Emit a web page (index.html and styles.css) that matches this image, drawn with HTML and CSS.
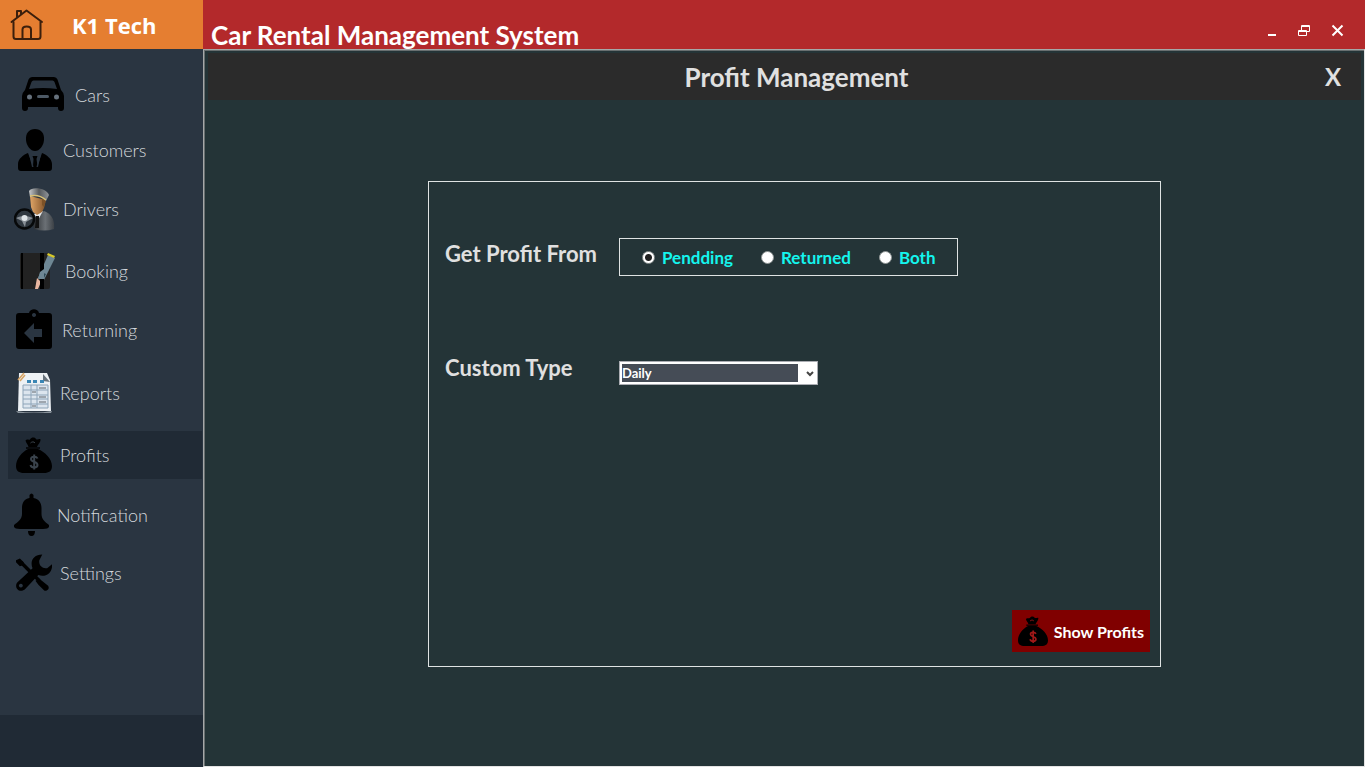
FILE: index.html
```
<!DOCTYPE html>
<html lang="en">
<head>
<meta charset="utf-8">
<title>Car Rental Management System</title>
<link rel="stylesheet" href="styles.css">
</head>
<body>
<svg class="sprite" aria-hidden="true">
  <symbol id="money-bag" viewBox="0 0 36 36">
    <path fill="#000" d="M9.500 3.500 C11 1.500 12.500 3.500 14 2.500 C15.500 0 18.500 0 20 2 C21.500 3.500 23.500 1 24.500 2.500 C24.500 6 22 7 21 10 H12.500 C12 7 10 6.500 9.500 3.500Z M12 12 H22 C29 15 36 22 36 29 C36 34 33 36 28 36 H8 C3 36 0 34 0 29 C0 22 6 15 12 12Z"/>
    <path fill="none" stroke="#000" stroke-width="1.500" d="M10 11 H24"/>
    <path class="dollar" fill="none" stroke-width="2" d="M21.500 21.500 C20.500 19 15 19 15 22 C15 25.500 21.500 24 21.500 28 C21.500 31 15.500 31.500 14.500 28 M18.200 17.500 V32.500"/>
    <path class="dollar" fill="none" stroke-width="1" d="M14.500 6 C16 4.500 18 4.500 19 6"/>
  </symbol>
</svg>
<div class="app">
  <aside class="sidebar">
    <header class="brand">
      <svg class="home" viewBox="0 0 34 32" width="34" height="32" fill="none" stroke="#3b1f0c" stroke-width="2" stroke-linecap="round" stroke-linejoin="round">
        <path d="M1.500 13 L16.500 1.500 L32 13"/>
        <path d="M3.500 13 V27.500 Q3.500 30 6 30 H28 Q30.500 30 30.500 27.500 V13"/>
        <path d="M7 8 V2 H11 V5"/>
        <path d="M12.500 30 V20.500 Q12.500 17.500 16.700 17.500 Q21 17.500 21 20.500 V30"/>
      </svg>
      <span>K1 Tech</span>
    </header>
    <nav class="nav">
      <button class="item indent-xl" type="button">
        <svg viewBox="0 0 45 36" width="45" height="36">
          <path fill="#000" fill-rule="evenodd" d="M10 0 H32 Q34.500 0 35.500 2.500 L39 13 Q42 16 42 19 V31 Q42 34 39 34 Q36 34 36 31 V30 H6 V31 Q6 34 3 34 Q0 34 0 31 V19 Q0 16 3 13 L6.500 2.500 Q7.500 0 10 0Z M11.500 3.500 Q10 3.500 9.500 5 L7 12 Q21 10 35 12 L32.500 5 Q32 3.500 30.500 3.500Z"/>
          <circle cx="7.500" cy="20" r="2.500" fill="#66717c"/>
          <circle cx="34.500" cy="20" r="2.500" fill="#66717c"/>
          <rect x="15" y="18" width="12" height="3" rx="1.500" fill="#4d5965"/>
        </svg>
        Cars
      </button>
      <button class="item indent-m" type="button">
        <svg viewBox="2 0 37 42" width="37" height="42">
          <path fill="#000" d="M19 0 C25 0 28.500 4 28 11 C27.500 17 23.500 22 19 22 C14.500 22 10.500 17 10 11 C9.500 4 13 0 19 0Z"/>
          <path fill="#000" d="M12 24 L17 37 L17.500 30 L16.500 27 H21.500 L20.500 30 L21.500 37 L26 24 C31 26 36 30 36 35 V39 Q36 42 33 42 H5 Q2 42 2 39 V35 C2 30 7 26 12 24Z"/>
          <path fill="#2a3541" d="M13 25 L15 27 L17.500 38 H16 Z M25 25 L23 27 L20.500 38 H22Z"/>
        </svg>
        Customers
      </button>
      <button class="item indent-s" type="button">
        <svg viewBox="0 0 41 44" width="41" height="44">
          <defs>
            <linearGradient id="coat" x1="0" x2="1"><stop offset="0" stop-color="#24282c"/><stop offset=".6" stop-color="#6b7075"/><stop offset="1" stop-color="#3c4146"/></linearGradient>
            <linearGradient id="skin" x1="0" x2="1"><stop offset="0" stop-color="#dfa567"/><stop offset="1" stop-color="#805127"/></linearGradient>
            <linearGradient id="cap" x1="0" x2="1"><stop offset="0" stop-color="#c7c9cb"/><stop offset=".5" stop-color="#55595d"/><stop offset="1" stop-color="#909498"/></linearGradient>
          </defs>
          <path fill="url(#coat)" d="M18 33 L23 28 L30 24 C37 27 41 32 40 42 Q30 45 20 42Z"/>
          <path fill="#e4e6e8" d="M20 27 L29 24 L24 33Z"/>
          <path fill="#111" d="M22 29 L25 29 L25 41 L21 41Z"/>
          <path fill="url(#skin)" d="M16 9 L32 13 L30 21 L28 25 L23 28 L19 25 L17 20Z"/>
          <path fill="#7c5228" d="M28 12 L32 13 L30 20 L28 18Z"/>
          <path fill="url(#cap)" d="M15 4 C18 -1 33 1 35 8 L32 14 C27 9 22 8 16 10Z"/>
          <path fill="none" stroke="#d9c176" stroke-width="1.500" d="M16 9 Q25 7 32 13"/>
          <circle cx="10.500" cy="32" r="9.500" fill="#303840" stroke="#07090a" stroke-width="2.500"/>
          <path fill="#899097" d="M2 31 Q10 27 19 31 L12 35 L11 40 L8 34Z"/>
          <circle cx="10.500" cy="31" r="3" fill="#dfe4e7"/>
        </svg>
        Drivers
      </button>
      <button class="item indent-l" type="button">
        <svg viewBox="0 0 37 38" width="37" height="38">
          <rect x="0" y="1" width="30" height="36" rx="2" fill="#222"/>
          <rect x="1" y="1" width="2" height="36" fill="#000"/>
          <path fill="#6e8794" d="M28 3 L35 6 L24 28 L18 26Z"/>
          <path fill="#d8c928" d="M28 1 L35 4 L34 6 L27 3Z"/>
          <path fill="#e9b6a0" d="M17 26 L21 30 L18 37 H15Z"/>
          <path fill="#2d4955" d="M21 20 L26 22 L24 26 L19 25Z"/>
          <rect x="20" y="1" width="4" height="36" fill="#000"/>
          <path fill="#6e8794" d="M20 20 L24 17 V27 L18 27Z"/>
        </svg>
        Booking
      </button>
      <button class="item" type="button">
        <svg viewBox="0 0 38 42" width="38" height="42">
          <path fill="#000" fill-rule="evenodd" d="M3 4 H13 C14 -1 22 -1 23 4 H33 Q36 4 36 7 V37 Q36 40 33 40 H3 Q0 40 0 37 V7 Q0 4 3 4Z M18 4 a2 2 0 1 0 .01 0Z M8 24 L18 14 V20 H26 V28 H18 V34Z"/>
        </svg>
        Returning
      </button>
      <button class="item" type="button">
        <svg viewBox="0 0 36 42" width="36" height="42">
          <path fill="#8b949c" d="M0 39 Q18 42 36 39 L35 41 H2Z"/>
          <path fill="#edf1f4" d="M3 1 H31 L34 8 L35 39 H2Z"/>
          <path fill="#68737c" d="M27 2 L34 10 L27 9Z"/>
          <path fill="#3a86b4" d="M11 8 H15 V11 H11Z M17 8 H21 V11 H17Z M24 8 H28 V11 H24Z"/>
          <path fill="#dce5ee" stroke="#8da4b8" stroke-width="1" d="M7 13 H32 V36 H7Z M7 18 H32 M7 23 H32 M7 27 H32 M7 32 H32 M15 13 V36 M21 13 V36"/>
          <path fill="none" stroke="#899199" stroke-width="1.500" d="M23 16 H30 M16 20 H20 M23 25 H30 M23 30 H30 M16 34 H20"/>
          <path fill="none" stroke="#d6a363" stroke-width="1.500" d="M2 8 L8 1 M4 9 L9 3"/>
        </svg>
        Reports
      </button>
      <button class="item active" type="button" aria-current="page">
        <svg width="36" height="36"><use href="#money-bag"/></svg>
        Profits
      </button>
      <button class="item indent-s" type="button">
        <svg viewBox="0 0 35 44" width="35" height="44">
          <path fill="#000" d="M15.500 2 Q17.500 -1 19.500 2 V5 C25 6 27.500 10 27.500 15 V21 C27.500 26 31 29 35 32 Q36 36 29 36 H6 Q-1 36 0 32 C4 29 8 26 8 21 V15 C8 10 10 6 15.500 5Z M14 38 H21 Q21 43 17.500 43 Q14 43 14 38Z"/>
        </svg>
        Notification
      </button>
      <button class="item" type="button">
        <svg viewBox="0 0 37 38" width="36" height="38">
          <path stroke="#000" stroke-width="3.500" d="M5 8 L24 27"/>
          <path fill="#000" d="M0 6 L4 4 L8 8 L7 11 L4 12 L0 8Z M20 27 L24 25 L33 32 C35 35 32 38 29 37 L23 31Z"/>
          <path fill="#000" fill-rule="evenodd" d="M27 0 C18 0 14 7 17 14 L1 29 C-2 34 3 40 9 36 L23 21 C31 24 38 18 37 10 L32 14 C27 15 23 11 24 6Z M5 30 a2 2 0 1 0 .01 0Z"/>
        </svg>
        Settings
      </button>
    </nav>
    <div class="sidebar-foot"></div>
  </aside>

  <div class="window">
    <header class="titlebar">
      <h1>Car Rental Management System</h1>
      <div class="controls">
        <button type="button" aria-label="Minimize"><svg viewBox="0 0 14 14" width="14" height="14"><path stroke="#fff" stroke-width="2" d="M3 11 H11"/></svg></button>
        <button type="button" aria-label="Restore"><svg viewBox="0 0 14 14" width="14" height="14" fill="none" stroke="#fff"><path d="M3.500 6 V1.500 H11.500 V7.500 H8.500 M3 2.500 H12"/><path d="M.500 6.500 H8.500 V11.500 H.500Z M0 7.500 H9"/></svg></button>
        <button type="button" aria-label="Close"><svg viewBox="0 0 14 14" width="14" height="14"><path stroke="#fff" stroke-width="2" d="M1.500 1.500 L11.500 11.500 M11.500 1.500 L1.500 11.500"/></svg></button>
      </div>
    </header>
    <main class="page">
      <header class="page-head">
        <h2>Profit Management</h2>
        <button class="close" type="button" aria-label="Close page">X</button>
      </header>
      <form class="card">
        <div class="fields">
          <span class="label" id="source-label">Get Profit From</span>
          <div class="options" role="radiogroup" aria-labelledby="source-label">
            <label><input type="radio" name="source" checked>Pendding</label>
            <label><input type="radio" name="source">Returned</label>
            <label><input type="radio" name="source">Both</label>
          </div>
          <label class="label" for="period">Custom Type</label>
          <div class="select">
            <select id="period"><option>Daily</option></select>
            <svg viewBox="0 0 8 6" width="8" height="6"><path fill="none" stroke="#444" stroke-width="2" d="M1 1 L4 4 L7 1"/></svg>
          </div>
        </div>
        <button class="show" type="button">
          <svg width="30" height="30"><use href="#money-bag"/></svg>
          Show Profits
        </button>
      </form>
    </main>
  </div>
</div>
</body>
</html>
```
FILE: styles.css
```
* { box-sizing: border-box; }
body {
  margin: 0;
  font-family: "Century Gothic", Lato, "Open Sans", sans-serif;
  color: #e0e0e0;
}
button { border: 0; padding: 0; background: none; color: inherit; font: inherit; }
h1, h2 { margin: 0; font-weight: 700; }
svg { flex: none; }
.sprite { position: absolute; width: 0; height: 0; }
.app { display: grid; grid-template-columns: 203px 1fr; min-height: 100vh; }

.sidebar { display: flex; flex-direction: column; background: #2a3541; }
.brand {
  display: flex; align-items: center; gap: 28px;
  height: 49px; padding-left: 10px;
  background: #e57e31; color: #fff;
  font: 700 22px/28px "Open Sans", sans-serif;
}
.nav {
  flex: 1;
  display: grid; align-items: start; align-content: start;
  grid-template-rows: 55px 59px 62px 59px 63px 62px 60px 58px 48px;
  padding: 22px 1px 22px 8px;
}
.item {
  display: flex; align-items: center; gap: 8px;
  height: 48px; padding-left: 8px;
  font-size: 18px; font-weight: 300; color: #d4d8dc;
  white-space: nowrap;
}
.indent-s { padding-left: 6px; }
.indent-m { padding-left: 10px; }
.indent-l { padding-left: 12px; }
.indent-xl { padding-left: 14px; }
.active { background: #202a35; }
.dollar { stroke: var(--coin, #3a434c); }
.sidebar-foot { height: 52px; background: #202a35; }

.window { display: flex; flex-direction: column; }
.titlebar {
  display: flex; align-items: flex-end; justify-content: space-between;
  height: 49px; padding: 0 20px 0 8px;
  background: #b3292b; color: #fff;
}
.titlebar h1 { font-size: 26px; line-height: 28px; }
.controls { display: flex; gap: 19px; padding-bottom: 11px; }
.controls svg { display: block; }

.page {
  flex: 1; display: flex; flex-direction: column;
  padding: 3px 3px 0 4px;
  background: #243437;
  border: 1px solid; border-color: #a5a8a8 #e3e3e3 #e3e3e3 #a5a8a8;
  box-shadow: inset 1px 1px #696f70;
}
.page-head {
  display: grid; grid-template-columns: 1fr auto 1fr; align-items: center;
  height: 47px; padding: 0 20px 0 44px;
  background: #2b2b2b;
}
.page-head h2 { grid-column: 2; font-size: 26px; line-height: 30px; }
.close { justify-self: end; font-size: 24px; line-height: 30px; font-weight: 700; }

.card {
  flex: 1; display: flex; flex-direction: column; justify-content: space-between;
  margin: 81px 200px 99px 220px; padding: 56px 10px 14px 16px;
  border: 1px solid #dfe3e3;
}
.fields {
  display: grid; grid-template-columns: 174px 1fr; grid-template-rows: 38px 33px;
  row-gap: 76px;
}
.label { font-size: 22px; line-height: 32px; font-weight: 700; white-space: nowrap; }
.options {
  justify-self: start;
  display: flex; align-items: center; gap: 28px;
  height: 38px; padding: 0 22px;
  border: 1px solid #dfe3e3;
  color: #14f5ee; font-size: 17px; font-weight: 700;
}
.options label { display: flex; align-items: center; gap: 7px; }
.options input {
  appearance: none; width: 13px; height: 13px; margin: 0;
  border: 1px solid #8e9494; border-radius: 50%; background: #fff;
}
.options input:checked { background: radial-gradient(circle, #222 3px, #fff 4px); }
.select { position: relative; justify-self: start; align-self: end; width: 199px; height: 24px; }
.select select {
  appearance: none; display: block; width: 100%; height: 24px;
  padding: 2px 19px 2px 2px;
  border: 1px solid #abadb3; border-radius: 0;
  background: linear-gradient(#454c56, #454c56) content-box, #fff;
  color: #fff; font: 700 13px/18px "Century Gothic", Lato, sans-serif;
}
.select svg { position: absolute; right: 4px; top: 10px; pointer-events: none; }
.show {
  --coin: #a01818;
  align-self: flex-end;
  display: flex; align-items: center; gap: 6px;
  height: 42px; padding: 0 6px;
  background: #800000; color: #fff; font-size: 16px; font-weight: 700;
}
```
